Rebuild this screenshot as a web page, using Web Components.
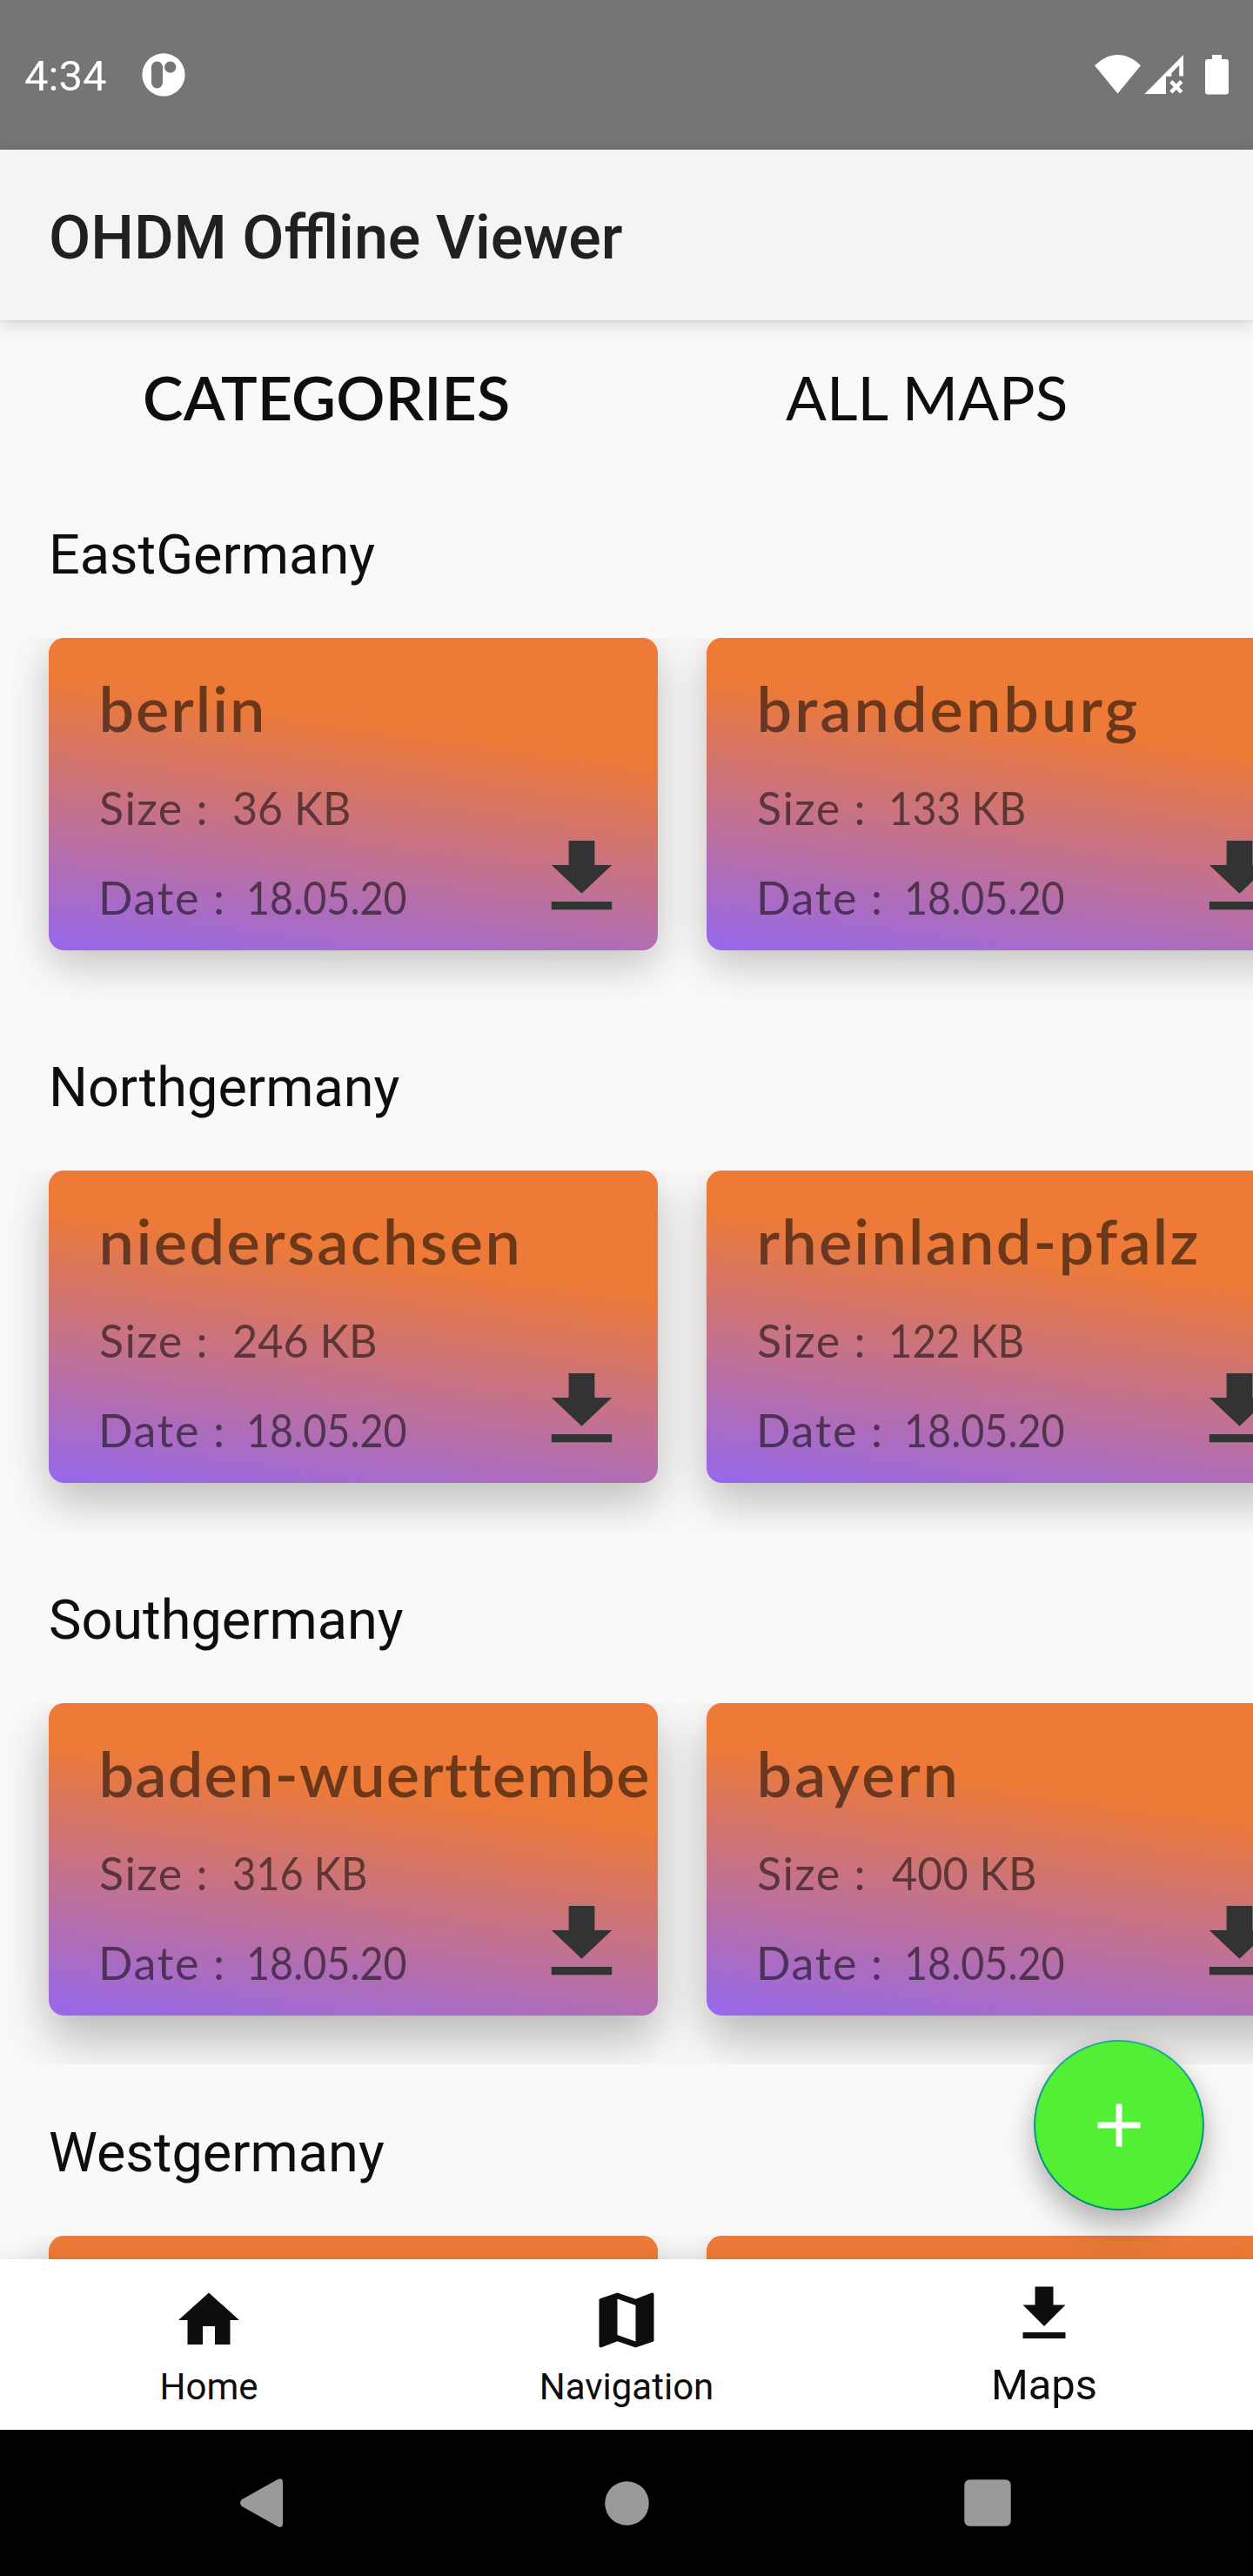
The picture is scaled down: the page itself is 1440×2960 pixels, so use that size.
<!DOCTYPE html>
<html lang="en">
<head>
<meta charset="utf-8">
<title>OHDM Offline Viewer</title>
<style>
  html, body { margin: 0; padding: 0; }
  body { width: 1440px; height: 2960px; overflow: hidden; font-family: Roboto, sans-serif; background: #faf9f8; }
</style>
</head>
<body>
<ohdm-app></ohdm-app>

<script>
const define = (name, html, setup) => {
  const tpl = document.createElement('template');
  tpl.innerHTML = html;
  customElements.define(name, class extends HTMLElement {
    connectedCallback() {
      if (this.shadowRoot) return;
      this.attachShadow({ mode: 'open' }).append(tpl.content.cloneNode(true));
      if (setup) setup(this, this.shadowRoot);
    }
  });
};

// A single line of text that spans exactly `width` pixels:
// short text is tracked out, long text is condensed.
const ctx = document.createElement('canvas').getContext('2d');
define('tracked-text', `
  <style>
    :host { display: block; flex: none; font-kerning: normal; font-variant-ligatures: none; }
    span { display: block; white-space: pre; transform-origin: 0 0; }
  </style><span></span>`, (el, root) => {
  const span = root.querySelector('span');
  const text = el.getAttribute('text');
  span.textContent = text;
  const cs = getComputedStyle(el);
  ctx.font = `${cs.fontWeight} ${cs.fontSize} ${cs.fontFamily}`;
  const m = ctx.measureText(text);
  const target = +el.getAttribute('width');
  const ink = m.actualBoundingBoxLeft + m.actualBoundingBoxRight;
  el.style.width = target + 'px';
  if (ink > target) {
    const k = target / ink;
    span.style.transform = `scaleX(${k.toFixed(4)})`;
    span.style.marginLeft = (m.actualBoundingBoxLeft * k).toFixed(2) + 'px';
  } else {
    span.style.letterSpacing = ((target - ink) / (text.length - 1)).toFixed(3) + 'px';
    span.style.marginLeft = m.actualBoundingBoxLeft.toFixed(2) + 'px';
  }
});

define('status-bar', `
  <style>
    :host { display: flex; align-items: center; height: 172px; background: #757575; color: #fff; box-sizing: border-box; padding: 0 28px 0 28px; }
    .time { font: 400 49px/60px Roboto, sans-serif; width: 135px; padding-top: 3px; }
    .fill { flex: 1; }
    svg { display: block; fill: #fff; }
  </style>
  <div class="time">4:34</div>
  <svg width="50" height="50" viewBox="162.5 61.5 50 50"><path fill-rule="evenodd" d="M187.5 61.8a24.6 24.6 0 1 1 0 49.2a24.6 24.6 0 1 1 0-49.2zM180 71a6.5 6.5 0 0 0-6.500 6.500V95.500a6.500 6.500 0 0 0 13 0V77.500A6.500 6.500 0 0 0 180 71zM195.200 71a6.600 6.600 0 1 0 0 13.200a6.600 6.600 0 1 0 0-13.200z"/></svg>
  <div class="fill"></div>
  <svg width="154" height="50" viewBox="1258 61 154 50">
    <path d="M1258 75.300C1266 67.500 1275 63 1284.500 63S1303 67.500 1311 75.300L1284.500 107.500z"/>
    <path fill-rule="evenodd" d="M1360 63V87.500H1355.200V75L1346.300 84V87.700H1340V108H1315.300z"/>
    <path d="M1345.800 93.700L1357.800 106M1357.800 93.700L1345.800 106" stroke="#fff" stroke-width="4.600"/>
    <path d="M1393 63h11v5h5a3 3 0 0 1 3 3v34.500a3 3 0 0 1-3 3h-21a3 3 0 0 1-3-3V71a3 3 0 0 1 3-3h5z"/>
  </svg>`);

define('title-bar', `
  <style>
    :host { display: flex; align-items: center; height: 196px; box-sizing: border-box; padding: 5px 56px 0; background: #f4f4f4; color: #202020;
      font: 500 70px/84px Roboto, sans-serif; position: relative; z-index: 2; box-shadow: 0 4px 20px rgba(0,0,0,.16), 0 1px 4px rgba(0,0,0,.06); }
  </style><slot></slot>`);

define('tab-strip', `
  <style>
    :host { display: flex; flex: none; height: 168px; box-sizing: border-box; padding: 46px 30px 0; color: #0e0e0e; font: 400 70px/84px Lato, sans-serif; }
    div { flex: 1; display: flex; justify-content: center; }
    .on { font-weight: 600; }
  </style>
  <div class="on"><tracked-text text="CATEGORIES" width="418"></tracked-text></div>
  <div><tracked-text text="ALL MAPS" width="323.500"></tracked-text></div>`);

define('map-card', `
  <style>
    :host { display: flex; flex: none; box-sizing: border-box; width: 700px; height: 359px; padding: 38px 0 0 59px; border-radius: 17.500px;
      background: linear-gradient(188deg, #ed7a36 31%, #9768ea 99%); color: rgba(0,0,0,.54); font-family: Lato, sans-serif;
      box-shadow: var(--card-shadow, 0 20px 46px rgba(0,0,0,.17), 0 0 56px rgba(0,0,0,.07)); }
    .info { flex: none; width: 494px; display: flex; flex-direction: column; }
    :host([peek]) .info, :host([peek]) svg { display: none; }
    .name { padding-left: 2.500px; font-size: 72px; line-height: 84px; font-weight: 600; }
    .line { display: flex; font-size: 52px; line-height: 62px; font-weight: 400; }
    .size { margin-top: 42px; gap: 33.500px; }
    .date { margin-top: 41px; padding-left: 2px; gap: 32px; }
    svg { flex: none; display: block; margin-top: 181px; fill: #333; }
  </style>
  <div class="info">
    <div class="name"></div>
    <div class="line size"><tracked-text text="Size :" width="120.500"></tracked-text></div>
    <div class="line date"><tracked-text text="Date :" width="138"></tracked-text><tracked-text text="18.05.20" width="180"></tracked-text></div>
  </div>
  <svg width="119" height="112" viewBox="0 0 24 24" preserveAspectRatio="none"><path d="M19 9h-4V3H9v6H5l7 7 7-7zM5 18v2h14v-2H5z"/></svg>`, (el, root) => {
  if (el.hasAttribute('peek')) return;
  const add = (sel, text, width) => {
    const t = document.createElement('tracked-text');
    t.setAttribute('text', text);
    t.setAttribute('width', width);
    root.querySelector(sel).append(t);
  };
  add('.name', el.getAttribute('name'), el.getAttribute('name-width'));
  add('.size', el.getAttribute('size'), el.getAttribute('size-width'));
});

define('map-section', `
  <style>
    :host { display: block; flex: none; }
    h2 { margin: 0; height: 197px; box-sizing: border-box; padding: 60px 56px 0; font: 400 63px/84px Roboto, sans-serif; color: #0e0e0e; }
    .row { display: flex; gap: 56px; height: 415px; box-sizing: border-box; padding: 0 56px 56px; overflow: hidden; }
  </style>
  <h2></h2><div class="row"><slot></slot></div>`, (el, root) => {
  root.querySelector('h2').textContent = el.getAttribute('heading');
});

define('add-button', `
  <style>
    :host { position: absolute; left: 1188px; top: 2344px; width: 196px; height: 196px; box-sizing: border-box; border-radius: 50%; padding: 2px;
      background: linear-gradient(#26a69a 8%, #00968a 50%, #008577); box-shadow: 0 20px 34px rgba(0,0,0,.25), 0 2px 24px rgba(0,0,0,.08); z-index: 3; }
    div { height: 192px; border-radius: 50%; background: #52ef35; display: flex; align-items: center; justify-content: center; }
    svg { display: block; fill: #fff; }
  </style>
  <div><svg width="84" height="84" viewBox="0 0 24 24"><path d="M19 13h-6v6h-2v-6H5v-2h6V5h2v6h6v2z"/></svg></div>`);

const ICONS = {
  home: 'M10 20v-6h4v6h5v-8h3L12 3 2 12h3v8z',
  map: 'M20.5 3l-.16.03L15 5.1 9 3 3.360 4.900c-.21.07-.36.25-.36.48V20.500c0 .28.22.5.5.5l.16-.03L9 18.900l6 2.100 5.640-1.900c.21-.07.36-.25.36-.48V3.500c0-.28-.22-.5-.5-.5zM15 19l-6-2.110V5l6 2.110V19z',
  download: 'M19 9h-4V3H9v6H5l7 7 7-7zM5 18v2h14v-2H5z'
};
define('nav-item', `
  <style>
    :host { display: flex; flex: 1; flex-direction: column; align-items: center; padding-top: 28px; color: #0e0e0e; font: 400 42px/50px Roboto, sans-serif; }
    :host([active]) { padding-top: 20.500px; font-size: 49px; }
    svg { display: block; fill: currentColor; }
    span { margin-top: 10px; }
    :host([active]) span { margin-top: 15px; }
  </style>
  <svg width="84" height="84" viewBox="0 0 24 24"><path/></svg><span><slot></slot></span>`, (el, root) => {
  root.querySelector('path').setAttribute('d', ICONS[el.getAttribute('icon')]);
});

define('bottom-nav', `
  <style>
    :host { display: flex; height: 196px; background: #fff; position: relative; z-index: 4; box-shadow: 0 0 24px rgba(0,0,0,.09); }
  </style><slot></slot>`);

define('system-nav', `
  <style>
    :host { display: flex; height: 168px; background: #000; position: relative; z-index: 5; align-items: center; justify-content: space-between; box-sizing: border-box; padding: 0 278px 0 276px; }
    svg { display: block; fill: #999; }
    .home { margin-left: 7px; }
  </style>
  <svg width="49" height="56" viewBox="0 0 49 56"><path d="M43.500 .8Q49-1.500 49 4.500V51.500Q49 57.500 43.500 55.200L2 32Q-2 28 2 24z"/></svg>
  <svg class="home" width="51" height="51" viewBox="0 0 51 51"><circle cx="25.500" cy="25.500" r="25.300"/></svg>
  <svg width="54" height="54" viewBox="0 0 54 54"><rect x=".3" y=".3" width="53.400" height="53.400" rx="6"/></svg>`);

define('ohdm-app', `
  <style>
    :host { display: flex; flex-direction: column; width: 1440px; height: 2960px; overflow: hidden; background: #faf9f8; position: relative; }
    main { height: 2228px; overflow: hidden; display: flex; flex-direction: column; }
    .mid { --card-shadow: 0 25px 50px rgba(0,0,0,.2), 0 0 56px rgba(0,0,0,.06); }
    .low { --card-shadow: 0 30px 54px rgba(0,0,0,.23), 0 0 56px rgba(0,0,0,.05); }
  </style>
  <status-bar></status-bar>
  <title-bar>OHDM Offline Viewer</title-bar>
  <main>
    <tab-strip></tab-strip>
    <map-section heading="EastGermany">
      <map-card name="berlin" name-width="183.500" size="36 KB" size-width="133"></map-card>
      <map-card name="brandenburg" name-width="433" size="133 KB" size-width="153"></map-card>
    </map-section>
    <map-section heading="Northgermany" class="mid">
      <map-card name="niedersachsen" name-width="477" size="246 KB" size-width="163"></map-card>
      <map-card name="rheinland-pfalz" name-width="502" size="122 KB" size-width="151"></map-card>
    </map-section>
    <map-section heading="Southgermany" class="low">
      <map-card name="baden-wuerttembe" name-width="624" size="316 KB" size-width="152"></map-card>
      <map-card name="bayern" name-width="224" size="400 KB" size-width="165"></map-card>
    </map-section>
    <map-section heading="Westgermany" class="low">
      <map-card peek></map-card>
      <map-card peek></map-card>
    </map-section>
  </main>
  <bottom-nav>
    <nav-item icon="home">Home</nav-item>
    <nav-item icon="map">Navigation</nav-item>
    <nav-item icon="download" active>Maps</nav-item>
  </bottom-nav>
  <system-nav></system-nav>
  <add-button></add-button>`);
</script>
</body>
</html>
